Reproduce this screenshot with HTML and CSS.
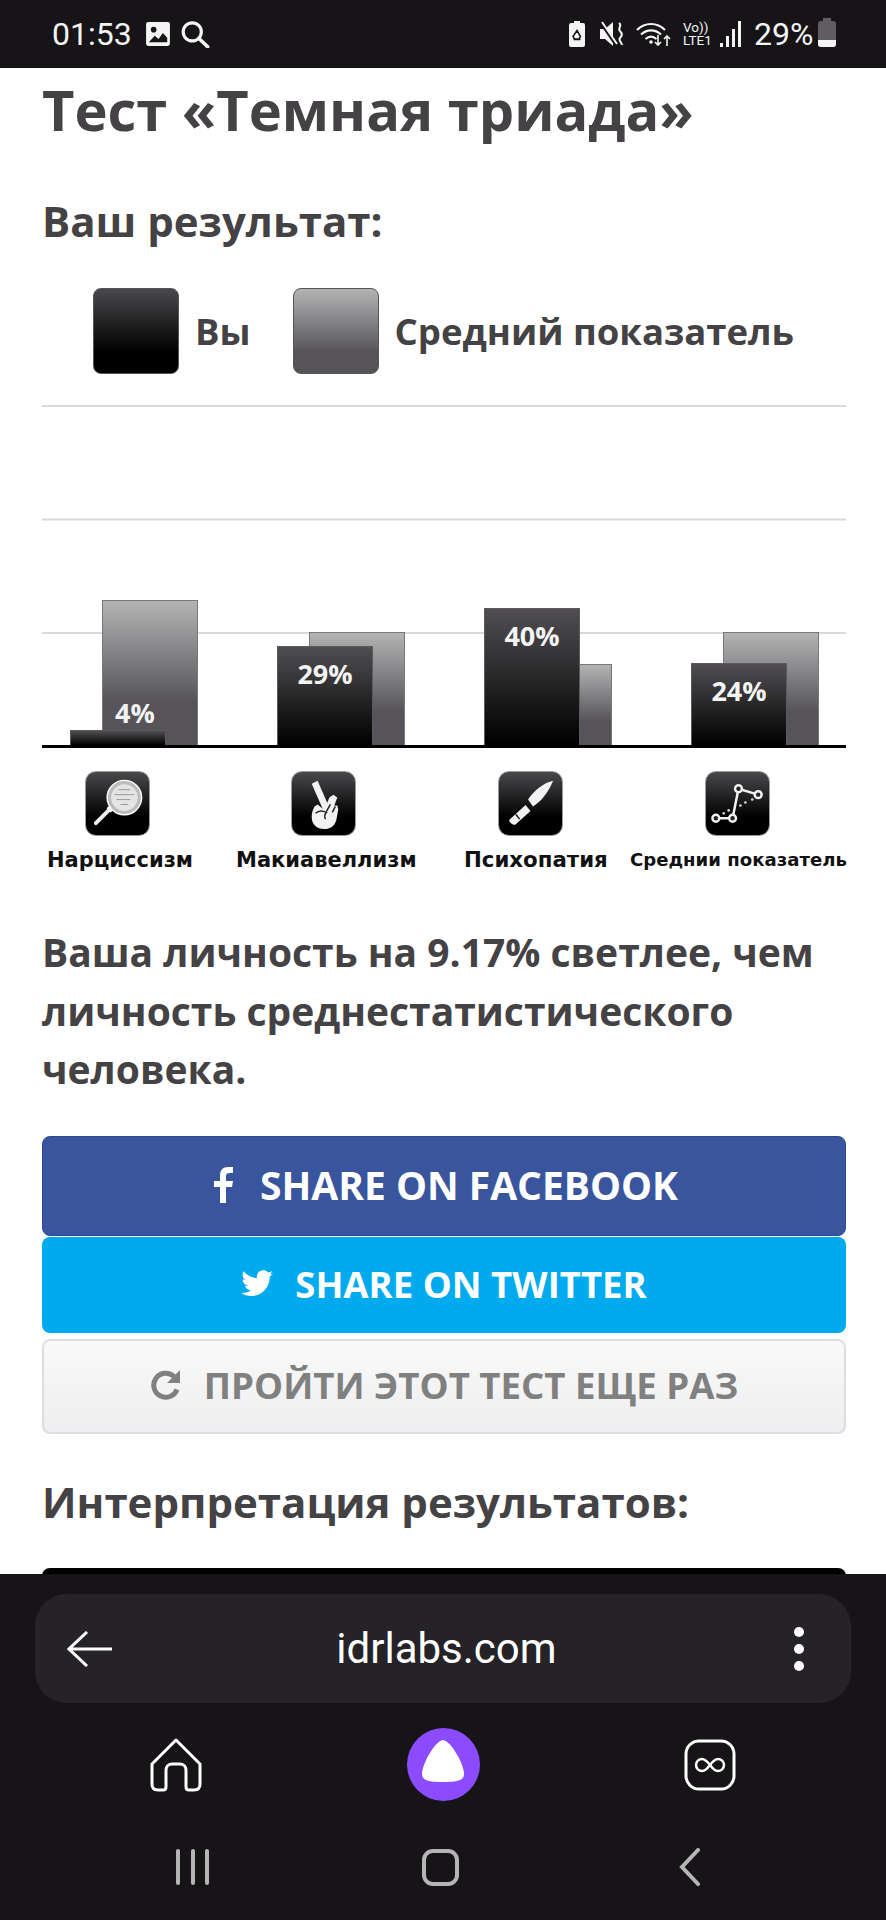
FILE: index.html
```html
<!DOCTYPE html>
<html lang="ru">
<head>
    <title>Тест «Темная триада»</title>
    <meta charset="utf-8"/>
    <link rel="stylesheet" href="styles.css">
</head>
<body>
<div class="status-bar">
    <div class="status-left">
        <span class="clock">01:53</span>
        <svg class="ic-image" viewBox="0 0 24 24"><rect x="1" y="1" width="22" height="22" rx="2" fill="#f4f4f4"/><circle cx="8" cy="8" r="2.6" fill="#161417"/><path d="M3.5 19.5l5.5-6 3.5 3 4-5.5 4 4.5v4z" fill="#161417"/></svg>
        <svg class="ic-search" viewBox="0 0 30 26"><circle cx="11.5" cy="11" r="8.5" fill="none" stroke="#f4f4f4" stroke-width="3"/><path d="M18 17.5l8 7.5" stroke="#f4f4f4" stroke-width="3.4" stroke-linecap="round"/></svg>
    </div>
    <div class="status-right">
        <svg class="ic-batt-saver" viewBox="0 0 18 26"><path d="M6 0h6v2h3a2 2 0 0 1 2 2v20a2 2 0 0 1-2 2H3a2 2 0 0 1-2-2V4a2 2 0 0 1 2-2h3z" fill="#f4f4f4"/><path d="M9 9.5l3.5 6-1.5 2.5H6.5L5 15.500zM5.500 18.500h7" fill="none" stroke="#161417" stroke-width="1.5"/></svg>
        <svg class="ic-mute" viewBox="0 0 27 26"><path d="M1 8h5l8-7v24l-8-7H1z" fill="#f4f4f4"/><path d="M2 2l15 22" stroke="#161417" stroke-width="3"/><path d="M3 1l15 22" stroke="#f4f4f4" stroke-width="2"/><path d="M20 2c4 3-2 5 1 8s2 5 0 7 2 5 2 7" fill="none" stroke="#f4f4f4" stroke-width="2"/></svg>
        <svg class="ic-wifi" viewBox="0 0 35 26"><path d="M1 9c8-8 20-8 28 0M5 13.5c6-5.5 14-5.5 20 0M9.5 18c3.5-3 7.5-3 11 0" fill="none" stroke="#f4f4f4" stroke-width="2.2"/><circle cx="15" cy="21" r="1.8" fill="#f4f4f4"/><path d="M22 14v10m-3-3l3 3 3-3M31 25V15m-3 3l3-3 3 3" fill="none" stroke="#f4f4f4" stroke-width="1.6"/></svg>
        <div class="volte"><span>Vo))</span><span>LTE1</span></div>
        <div class="signal"><i class="s1"></i><i class="s2"></i><i class="s3"></i><i class="s4"></i></div>
        <span class="percent">29%</span>
        <div class="battery"><i></i></div>
    </div>
</div>

<div class="page">
    <h1>Тест «Темная триада»</h1>
    <h2 class="result-title">Ваш результат:</h2>

    <div class="legend">
        <span class="swatch swatch-you"></span>
        <span class="legend-you">Вы</span>
        <span class="swatch swatch-avg"></span>
        <span>Средний показатель</span>
    </div>

    <div class="chart">
        <div class="group">
            <div class="bar you h-4"><span class="bar-num num-low">4%</span></div>
            <div class="bar avg h-145"></div>
        </div>
        <div class="group">
            <div class="bar you h-99"><span class="bar-num">29%</span></div>
            <div class="bar avg h-113"></div>
        </div>
        <div class="group">
            <div class="bar you h-137"><span class="bar-num">40%</span></div>
            <div class="bar avg h-81"></div>
        </div>
        <div class="group">
            <div class="bar you h-82"><span class="bar-num">24%</span></div>
            <div class="bar avg h-113"></div>
        </div>
    </div>

    <div class="traits">
        <div class="trait">
            <div class="trait-icon">
                <svg viewBox="0 0 64 64"><path d="M10 52l15-15" stroke="#eee" stroke-width="4" stroke-linecap="round"/><path d="M23 39l4-4" stroke="#fff" stroke-width="6"/><circle cx="39" cy="26" r="15.5" fill="#e4e4e4" stroke="#bbb" stroke-width="4"/><circle cx="39" cy="26" r="17.5" fill="none" stroke="#fff" stroke-width="1.5"/><path d="M33 18h12M29 23h20M31 28h14M35 33h8" stroke="#999" stroke-width="1"/></svg>
            </div>
            <span class="trait-name name-1">Нарциссизм</span>
        </div>
        <div class="trait">
            <div class="trait-icon">
                <svg viewBox="0 0 64 64"><path d="M20 12l6-3 11 25-6 3z" fill="#f2f2f2"/><path d="M38 26l4-3 4 3-3 8 3 0 1 4-2 11c-2 6-6 9-12 9-8 0-13-5-13-12 0-4 1-8 3-11l3-2 5 4 4-4z" fill="#f2f2f2"/><path d="M24 42c3-3 7-3 11-1-2 2-2 5-1 7M39 33l-4 7M44 35l-3 6" fill="none" stroke="#222" stroke-width="1.5"/></svg>
            </div>
            <span class="trait-name name-2">Макиавеллизм</span>
        </div>
        <div class="trait">
            <div class="trait-icon">
                <svg viewBox="0 0 64 64"><path d="M55 9C46 11 36 18 29.5 28l5 7C42 31 50 21 55 9z" fill="#f2f2f2"/><path d="M27 33.5l5 6-15.5 14c-2 1-7-3-6-5z" fill="#f2f2f2"/><path d="M17 43l4 5" stroke="#222" stroke-width="1.5"/></svg>
            </div>
            <span class="trait-name name-3">Психопатия</span>
        </div>
        <div class="trait">
            <div class="trait-icon">
                <svg viewBox="0 0 64 64"><path d="M10 47H27L33 17L53 23" fill="none" stroke="#f2f2f2" stroke-width="2.5"/><g fill="#222" stroke="#f2f2f2" stroke-width="2.5"><circle cx="10" cy="47" r="3.5"/><circle cx="27" cy="47" r="3.5"/><circle cx="33" cy="17" r="3.5"/><circle cx="53" cy="23" r="3.5"/></g><g fill="#ddd"><circle cx="18" cy="42" r="1.3"/><circle cx="23" cy="39" r="1.3"/><circle cx="35" cy="34" r="1.3"/><circle cx="40" cy="31" r="1.3"/><circle cx="47" cy="28" r="1.3"/></g></svg>
            </div>
            <span class="trait-name name-4">Среднии показатель</span>
        </div>
    </div>

    <p class="summary">Ваша личность на 9.17% светлее, чем личность среднестатистического человека.</p>

    <a class="btn btn-fb">
        <svg class="btn-icon" viewBox="0 0 20 36"><path d="M6 36V20H0v-6h6V9c0-6 3-9 8-9h5v6h-3c-3 0-4 1-4 3v5h7l-1 6h-6v16z" fill="#fff"/></svg>
        SHARE ON FACEBOOK
    </a>
    <a class="btn btn-tw">
        <svg class="btn-icon" viewBox="0 0 32 28"><path d="M32 3.5c-1 .6-2.3 1-3.7 1.1 1.3-.8 2.4-2.1 2.9-3.6-1.3.8-2.6 1.3-4.1 1.6C25.9 1 24.2.2 22.3.2c-3.6 0-6.5 2.9-6.5 6.5 0 .5 0 1 .2 1.500C10.500 7.900 5.700 5.300 2.500 1.300 1.900 2.300 1.600 3.400 1.600 4.600c0 2.300 1.100 4.300 2.900 5.400-1 0-2-.3-2.900-.8v.1c0 3.200 2.200 5.800 5.200 6.400-.5.100-1.100.2-1.700.2-.4 0-.8 0-1.200-.1.800 2.600 3.200 4.500 6.100 4.500-2.200 1.700-5 2.800-8.100 2.800-.5 0-1 0-1.600-.1C3 24.900 6.400 26 10.100 26c12 0 18.600-10 18.600-18.600V6.500c1.300-.8 2.400-1.800 3.300-3z" fill="#fff"/></svg>
        SHARE ON TWITTER
    </a>
    <a class="btn btn-again">
        <svg class="btn-icon" viewBox="0 0 32 32"><path d="M27 20.500A12 12 0 1 1 24 7.500" fill="none" stroke="#808080" stroke-width="5"/><path d="M30 1v13H17z" fill="#808080"/></svg>
        ПРОЙТИ ЭТОТ ТЕСТ ЕЩЕ РАЗ
    </a>

    <h2 class="interp-title">Интерпретация результатов:</h2>
    <div class="interp-box"></div>
</div>

<div class="browser-bar">
    <div class="url-bar">
        <svg class="ic-back" viewBox="0 0 46 36"><path d="M45 18H3M20 1L2 18l18 17" fill="none" stroke="#fff" stroke-width="3"/></svg>
        <span class="url">idrlabs.com</span>
        <div class="menu-dots"><i></i><i></i><i></i></div>
    </div>
    <div class="tab-row">
        <svg class="ic-home" viewBox="0 0 52 54"><path d="M26 2L2 26v20c0 4 2 6 6 6h5c2 0 3-1 3-3V32c0-4 3-6 6-6h8c3 0 6 2 6 6v17c0 2 1 3 3 3h5c4 0 6-2 6-6V26z" fill="none" stroke="#fff" stroke-width="3" stroke-linejoin="round"/></svg>
        <div class="alice"><svg viewBox="0 0 46 44"><path d="M23 0C31 1 44 24 44 34 44 41 36 42 23 42 10 42 2 41 2 34 2 24 15 1 23 0z" fill="#fff"/></svg></div>
        <svg class="ic-loop" viewBox="0 0 52 52"><rect x="2" y="2" width="48" height="48" rx="13" fill="none" stroke="#fff" stroke-width="3"/><path d="M26 26c-3-4-5-6-8-6s-6 2.5-6 6 3 6 6 6 5-2 8-6 5-6 8-6 6 2.500 6 6-3 6-6 6-5-2-8-6z" fill="none" stroke="#fff" stroke-width="2.5"/></svg>
    </div>
    <div class="sys-row">
        <div class="sys-lines"><i></i><i></i><i></i></div>
        <div class="sys-square"></div>
        <svg class="ic-chevron" viewBox="0 0 22 38"><path d="M19 2L3 19l16 17" fill="none" stroke="#b5b5b5" stroke-width="4" stroke-linecap="round"/></svg>
    </div>
</div>
</body>
</html>
```

FILE: styles.css
```css
* {
    box-sizing: border-box;
}

body {
    margin: 0;
    width: 886px;
    height: 1920px;
    overflow: hidden;
    display: flex;
    flex-direction: column;
    background-color: #fff;
    font-family: "Open Sans", sans-serif;
    color: #444244;
}

/* status bar */
.status-bar {
    height: 68px;
    flex: none;
    background-color: #161417;
    color: #f4f4f4;
    display: flex;
    justify-content: space-between;
    align-items: center;
    padding: 0 50px 0 52px;
    font-family: Roboto, sans-serif;
}

.status-left,
.status-right {
    display: flex;
    align-items: center;
}

.clock {
    font-size: 32px;
    width: 93px;
}

.ic-image {
    width: 26px;
    height: 26px;
    margin-right: 9px;
}

.ic-search {
    width: 32px;
    height: 28px;
}

.ic-batt-saver {
    width: 18px;
    height: 26px;
    margin-right: 13px;
}

.ic-mute {
    width: 27px;
    height: 26px;
    margin-right: 10px;
}

.ic-wifi {
    width: 35px;
    height: 26px;
    margin-right: 12px;
}

.volte {
    display: flex;
    flex-direction: column;
    align-items: flex-start;
    font-size: 13.5px;
    line-height: 13px;
    width: 37px;
}

.signal {
    display: flex;
    align-items: flex-end;
    gap: 3px;
    height: 26px;
    margin-right: 13px;
}

.signal i {
    display: block;
    width: 3px;
    background-color: #f4f4f4;
}

.s1 { height: 4px; }
.s2 { height: 11px; }
.s3 { height: 18px; }
.s4 { height: 26px; }

.percent {
    font-size: 32px;
    width: 64px;
}

.battery {
    width: 18px;
    height: 26px;
    border-radius: 3px;
    background-color: #5f5d60;
    position: relative;
}

.battery::before {
    content: "";
    position: absolute;
    left: 5px;
    top: -3px;
    width: 8px;
    height: 3px;
    background-color: #5f5d60;
}

.battery i {
    position: absolute;
    left: 0;
    right: 0;
    bottom: 0;
    height: 7px;
    background-color: #f4f4f4;
    border-radius: 0 0 3px 3px;
}

/* page */
.page {
    flex: 1;
    overflow: hidden;
    padding: 5px 40px 0 42px;
}

h1 {
    margin: 0;
    font-size: 56px;
    line-height: 72px;
    font-weight: 700;
}

h2 {
    margin: 0;
    font-size: 42px;
    font-weight: 700;
    line-height: 52px;
}

.result-title {
    margin-top: 50px;
}

.legend {
    display: flex;
    align-items: center;
    margin-top: 41px;
    padding-left: 51px;
    font-size: 36.5px;
    line-height: 82px;
    font-weight: 700;
}

.swatch {
    width: 86px;
    height: 86px;
    border-radius: 8px;
    border: 1px solid #555;
    margin-right: 16px;
}

.swatch-you {
    background: linear-gradient(#4a484b, #000 75%);
}

.swatch-avg {
    background: linear-gradient(#b4b3b4, #565458 75%);
}

.legend-you {
    margin-right: 42px;
}

.chart {
    height: 343px;
    margin-top: 31px;
    border-bottom: 3px solid #000;
    padding-left: 28px;
    display: flex;
    align-items: flex-end;
    gap: 79px;
    background-image: linear-gradient(#d9d8da 2px, transparent 2px);
    background-size: 100% 113.5px;
}

.group {
    display: flex;
    align-items: flex-end;
    width: 128px;
}

.bar {
    flex: none;
    width: 96px;
    position: relative;
    border: 1px solid #777;
    border-bottom: none;
}

.you {
    z-index: 1;
    background: linear-gradient(#504e51, #000);
    border-color: #5c5a5d;
}

.avg {
    margin-left: -64px;
    background: linear-gradient(#b4b3b4, #565458 70%);
}

.h-4 { height: 15px; }
.h-99 { height: 99px; }
.h-137 { height: 137px; }
.h-82 { height: 82px; }
.h-145 { height: 145px; }
.h-113 { height: 113px; }
.h-81 { height: 81px; }

.bar-num {
    position: absolute;
    left: 0;
    right: 0;
    top: 8px;
    text-align: center;
    color: #f4f4f4;
    font-size: 27px;
    line-height: 38px;
    font-weight: 700;
}

.num-low {
    left: 34px;
    top: -37px;
}

/* traits under the chart */
.traits {
    display: grid;
    grid-template-columns: 206px 207px 207px 184px;
    margin-top: 23px;
}

.trait {
    display: flex;
    flex-direction: column;
    align-items: flex-start;
}

.trait-icon {
    width: 65px;
    height: 65px;
    margin-left: 43px;
    border-radius: 11px;
    background: linear-gradient(#4a484b, #000 72%);
    border: 1px solid #999;
}

.trait-icon svg {
    display: block;
    width: 100%;
    height: 100%;
}

.trait-name {
    margin-top: 9px;
    font-family: "DejaVu Sans", sans-serif;
    font-weight: 700;
    color: #111;
    line-height: 30px;
    white-space: nowrap;
}

.name-1 { font-size: 21px; margin-left: 5px; }
.name-2 { font-size: 21px; margin-left: -12px; }
.name-3 { font-size: 21.3px; margin-left: 9px; }
.name-4 { font-size: 18.1px; margin-left: -32px; }

.summary {
    margin: 48px 0 0;
    font-size: 39px;
    line-height: 58.5px;
    font-weight: 700;
}

/* buttons */
.btn {
    display: flex;
    justify-content: center;
    align-items: center;
    gap: 22px;
    border-radius: 8px;
    padding-bottom: 2px;
    font-size: 36.6px;
    font-weight: 700;
    color: #fff;
}

.btn-fb {
    height: 100px;
    margin-top: 37px;
    padding-left: 4px;
    gap: 26px;
    font-size: 39px;
    background-color: #39559d;
    border: 1px solid #2f4a90;
}

.btn-tw {
    height: 96px;
    margin-top: 1px;
    background-color: #00aaee;
}

.btn-again {
    height: 95px;
    margin-top: 6px;
    background: linear-gradient(#fafafa, #eeedef);
    border: 2px solid #dedddf;
    color: #808080;
}

.btn-fb .btn-icon {
    width: 20px;
    height: 36px;
}

.btn-tw .btn-icon {
    width: 32px;
    height: 28px;
}

.btn-again .btn-icon {
    width: 32px;
    height: 32px;
}

.interp-title {
    margin-top: 42px;
}

.interp-box {
    height: 40px;
    margin-top: 40px;
    background-color: #000;
    border-radius: 8px 8px 0 0;
}

/* browser chrome */
.browser-bar {
    height: 346px;
    flex: none;
    background-color: #161417;
    padding: 20px 35px 0;
}

.url-bar {
    height: 109px;
    background-color: #252327;
    border-radius: 32px;
    display: flex;
    align-items: center;
    justify-content: space-between;
    padding: 0 47px 0 32px;
}

.ic-back {
    width: 46px;
    height: 36px;
}

.url {
    color: #fff;
    font-family: Roboto, sans-serif;
    font-size: 42px;
    margin-right: 14px;
}

.menu-dots {
    display: flex;
    flex-direction: column;
    gap: 7px;
}

.menu-dots i {
    display: block;
    width: 10px;
    height: 10px;
    border-radius: 50%;
    background-color: #fff;
}

.tab-row {
    display: flex;
    justify-content: space-between;
    align-items: center;
    margin-top: 25px;
    padding: 0 115px;
}

.ic-home {
    width: 52px;
    height: 54px;
}

.alice {
    width: 73px;
    height: 73px;
    border-radius: 50%;
    background-color: #8c4bff;
    display: flex;
    align-items: center;
    justify-content: center;
    padding-bottom: 6px;
}

.alice svg {
    width: 46px;
    height: 44px;
}

.ic-loop {
    width: 52px;
    height: 52px;
}

.sys-row {
    display: flex;
    justify-content: space-between;
    align-items: center;
    margin-top: 47px;
    padding: 0 150px 0 141px;
}

.sys-lines {
    display: flex;
    justify-content: space-between;
    width: 33px;
    height: 36px;
}

.sys-lines i {
    width: 4px;
    border-radius: 2px;
    background-color: #b5b5b5;
}

.sys-square {
    width: 37px;
    height: 37px;
    margin-right: 8px;
    border: 4px solid #b5b5b5;
    border-radius: 11px;
}

.ic-chevron {
    width: 22px;
    height: 38px;
}
```
